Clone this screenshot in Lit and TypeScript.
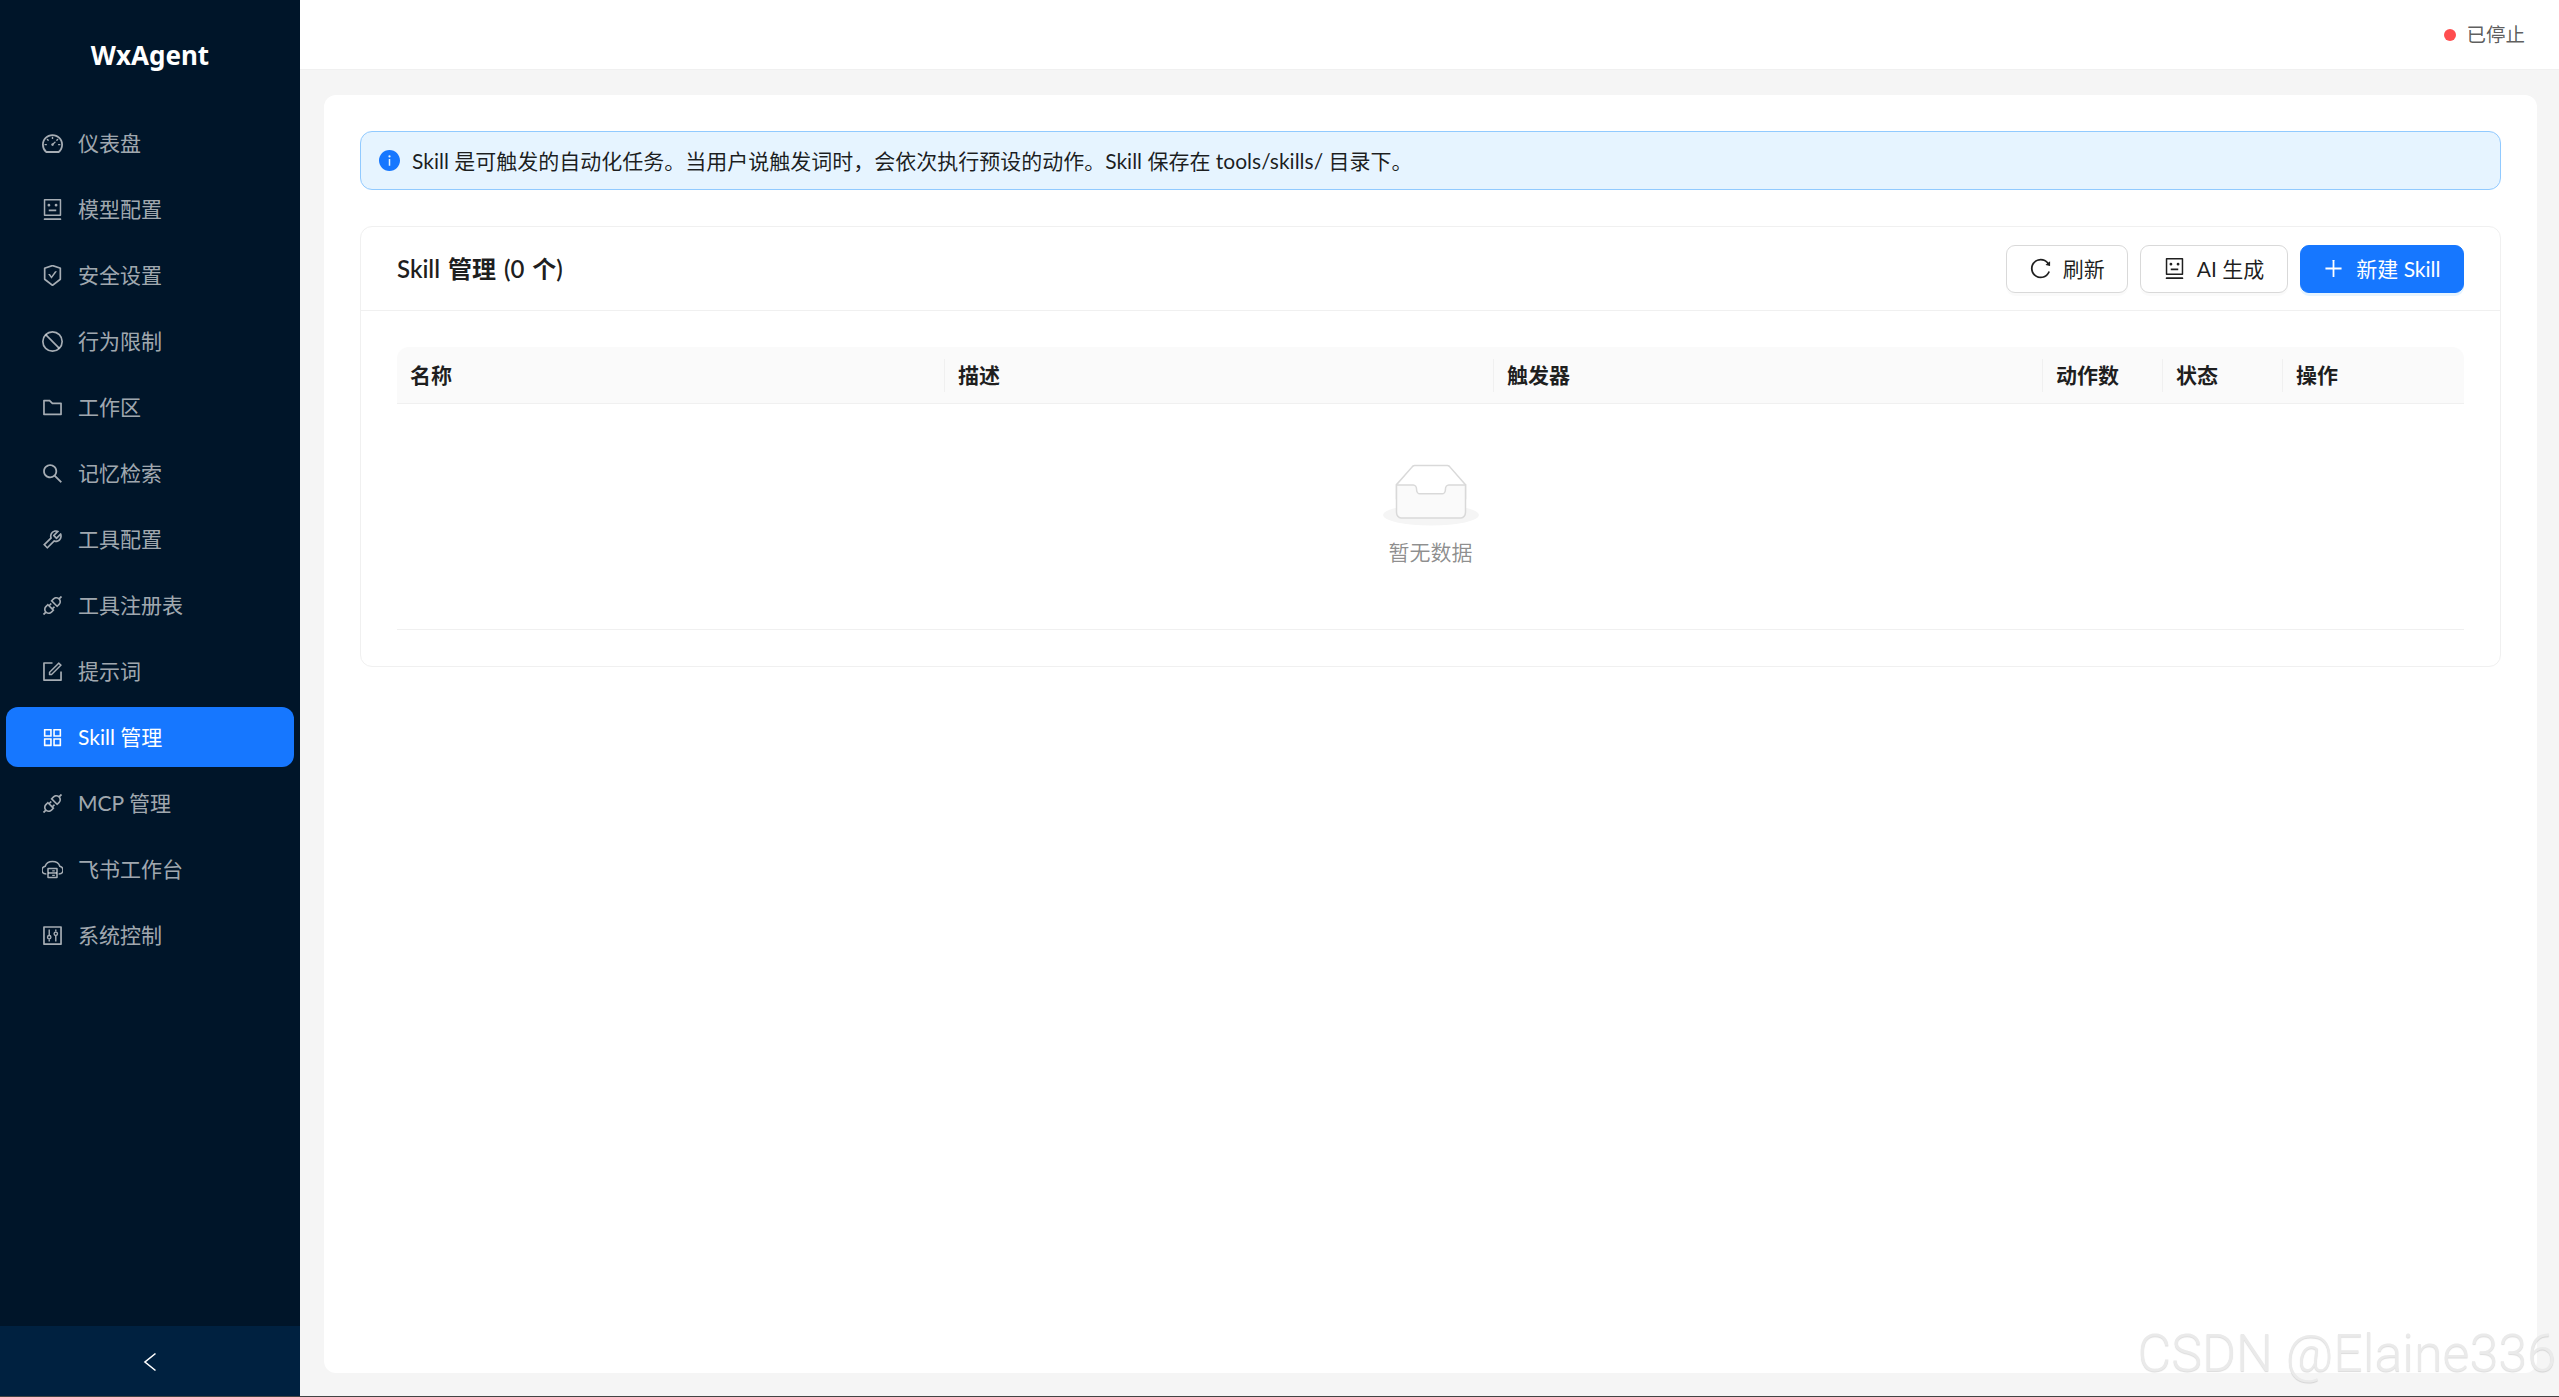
import { LitElement, html, css, svg } from 'lit';
import { customElement } from 'lit/decorators.js';

const P = {
  dashboard: svg`<path d="M924.8 385.6a446.7 446.7 0 00-96-142.4 446.7 446.7 0 00-142.4-96C631.1 123.8 572.5 112 512 112s-119.1 11.8-174.4 35.2a446.7 446.7 0 00-142.4 96 446.7 446.7 0 00-96 142.4C75.8 440.9 64 499.5 64 560c0 132.7 58.3 257.7 159.9 343.1l1.7 1.4c5.8 4.8 13.1 7.5 20.6 7.5h531.7c7.5 0 14.8-2.7 20.6-7.5l1.7-1.4C901.7 817.7 960 692.7 960 560c0-60.5-11.9-119.1-35.2-174.4zM761.4 836H262.6A371.12 371.12 0 01140 560c0-99.4 38.7-192.8 109-263 70.3-70.3 163.7-109 263-109 99.4 0 192.8 38.7 263 109 70.3 70.3 109 163.7 109 263 0 105.6-44.5 205.5-122.6 276zM623.5 421.5a8.03 8.03 0 00-11.3 0L527.7 506c-18.7-5-39.4-.2-54.1 14.5a55.95 55.95 0 000 79.2 55.95 55.95 0 0079.2 0 55.87 55.87 0 0014.5-54.1l84.5-84.5c3.1-3.1 3.1-8.2 0-11.3l-28.3-28.3zM490 320h44c4.4 0 8-3.6 8-8v-80c0-4.4-3.6-8-8-8h-44c-4.4 0-8 3.6-8 8v80c0 4.4 3.6 8 8 8zm260 218v44c0 4.4 3.6 8 8 8h80c4.4 0 8-3.6 8-8v-44c0-4.4-3.6-8-8-8h-80c-4.4 0-8 3.6-8 8zm12.7-197.2l-31.1-31.1a8.03 8.03 0 00-11.3 0l-56.6 56.6a8.03 8.03 0 000 11.3l31.1 31.1c3.1 3.1 8.2 3.1 11.3 0l56.6-56.6c3.1-3.1 3.1-8.2 0-11.3zm-458.6-31.1a8.03 8.03 0 00-11.3 0l-31.1 31.1a8.03 8.03 0 000 11.3l56.6 56.6c3.1 3.1 8.2 3.1 11.3 0l31.1-31.1c3.1-3.1 3.1-8.2 0-11.3l-56.6-56.6zM262 530h-80c-4.4 0-8 3.6-8 8v44c0 4.4 3.6 8 8 8h80c4.4 0 8-3.6 8-8v-44c0-4.4-3.6-8-8-8z"/>`,
  robot: svg`<path d="M300 328a60 60 0 10120 0 60 60 0 10-120 0zM852 64H172c-17.7 0-32 14.3-32 32v660c0 17.7 14.3 32 32 32h680c17.7 0 32-14.3 32-32V96c0-17.7-14.3-32-32-32zm-32 660H204V128h616v596zM604 328a60 60 0 10120 0 60 60 0 10-120 0zm250.2 556H169.8c-16.5 0-29.8 14.3-29.8 32v36c0 4.4 3.3 8 7.4 8h729.1c4.1 0 7.4-3.6 7.4-8v-36c.1-17.7-13.2-32-29.7-32zM664 508H360c-4.4 0-8 3.6-8 8v60c0 4.4 3.6 8 8 8h304c4.4 0 8-3.6 8-8v-60c0-4.4-3.6-8-8-8z"/>`,
  safety: svg`<path d="M866.9 169.9L527.1 54.1C523 52.7 517.5 52 512 52s-11 .7-15.1 2.1L157.1 169.9c-8.3 2.8-15.1 12.4-15.1 21.2v482.4c0 8.8 5.7 20.4 12.6 25.9L499.3 968c3.5 2.7 8 4.1 12.6 4.1s9.2-1.4 12.6-4.1l344.7-268.6c6.9-5.4 12.6-17 12.6-25.9V191.1c.2-8.8-6.6-18.3-14.9-21.2zM810 654.3L512 886.5 214 654.3V226.7l298-101.6 298 101.6v427.6zm-405.8-201c-3-4.1-7.8-6.6-13-6.6H336c-6.5 0-10.3 7.4-6.5 12.7l126.4 174a16.1 16.1 0 0026 0l212.6-292.7c3.8-5.3 0-12.7-6.5-12.7h-55.2c-5.1 0-10 2.5-13 6.6L468.9 542.4l-64.7-89.1z"/>`,
  stop: svg`<circle cx="512" cy="512" r="412" fill="none" stroke="currentColor" stroke-width="72"/><path d="M222 222L802 802" fill="none" stroke="currentColor" stroke-width="72"/>`,
  folder: svg`<path d="M880 298.4H521L403.7 186.2a8.15 8.15 0 00-5.5-2.2H144c-17.7 0-32 14.3-32 32v592c0 17.7 14.3 32 32 32h736c17.7 0 32-14.3 32-32V330.4c0-17.7-14.3-32-32-32zM840 768H184V256h188.5l119.6 114.4H840V768z"/>`,
  search: svg`<path d="M909.6 854.5L649.9 594.8C690.2 542.7 712 479 712 412c0-80.2-31.3-155.4-87.9-212.1-56.6-56.7-132-87.9-212.1-87.9s-155.5 31.3-212.1 87.9C143.2 256.5 112 331.8 112 412c0 80.1 31.3 155.5 87.9 212.1C256.5 680.8 331.8 712 412 712c67 0 130.6-21.8 182.7-62l259.7 259.6a8.2 8.2 0 0011.6 0l43.6-43.5a8.2 8.2 0 000-11.6zM570.4 570.4C528 612.7 471.8 636 412 636s-116-23.3-158.4-65.6C211.3 528 188 471.8 188 412s23.3-116.1 65.6-158.4C296 211.3 352.2 188 412 188s116.1 23.2 158.4 65.6S636 352.2 636 412s-23.3 116.1-65.6 158.4z"/>`,
  tool: svg`<path d="M876.6 239.5c-.5-.9-1.2-1.8-2-2.5-5-5-13.1-5-18.1 0L684.2 409.3l-67.9-67.9L788.7 169c.8-.8 1.4-1.6 2-2.5 3.6-6.1 1.6-13.9-4.5-17.5-98.2-58-226.8-44.7-311.3 39.7-67 67-89.2 162-66.5 247.4l-293 293c-3 3-2.8 7.9.3 11l169.7 169.7c3.1 3.1 8.1 3.3 11 .3l292.9-292.9c85.5 22.8 180.5.7 247.6-66.4 84.4-84.5 97.7-213.1 39.7-311.3zM786 499.8c-58.1 58.1-145.3 69.3-214.6 33.6l-8.8 8.8-.1-.1-274 274.1-79.2-79.2 230.1-230.1s0 .1.1.1l52.8-52.8c-35.7-69.3-24.5-156.5 33.6-214.6a184.2 184.2 0 01144-53.5L537 318.9a32.05 32.05 0 000 45.3l124.5 124.5a32.05 32.05 0 0045.3 0l132.8-132.8c3.7 51.8-14.4 104.8-53.6 143.9z"/>`,
  api: svg`<path d="M917.7 148.8l-42.4-42.4c-1.6-1.6-3.6-2.3-5.7-2.3s-4.1.8-5.7 2.3l-76.1 76.1a199.27 199.27 0 00-112.1-34.3c-51.2 0-102.4 19.5-141.5 58.6L432.3 308.7a8.03 8.03 0 000 11.3L704 591.7c1.6 1.6 3.6 2.3 5.7 2.3 2 0 4.1-.8 5.7-2.3l101.9-101.9c68.9-69 77-175.7 24.3-253.5l76.1-76.1c3.1-3.2 3.1-8.3 0-11.4zM769.1 441.7l-59.4 59.4-186.8-186.8 59.4-59.4c24.9-24.9 58.1-38.7 93.4-38.7 35.3 0 68.4 13.7 93.4 38.7 24.9 24.9 38.7 58.1 38.7 93.4 0 35.3-13.8 68.4-38.7 93.4zm-190.2 105a8.03 8.03 0 00-11.3 0L501 613.3 410.7 523l66.7-66.7c3.1-3.1 3.1-8.2 0-11.3L441 408.6a8.03 8.03 0 00-11.3 0L363 475.3l-43-43a7.85 7.85 0 00-5.7-2.3c-2 0-4.1.8-5.7 2.3L206.8 534.2c-68.9 69-77 175.7-24.3 253.5l-76.1 76.1a8.03 8.03 0 000 11.3l42.4 42.4c1.6 1.6 3.6 2.3 5.7 2.3s4.1-.8 5.7-2.3l76.1-76.1c33.7 22.9 72.9 34.3 112.1 34.3 51.2 0 102.4-19.5 141.5-58.6l101.9-101.9c3.1-3.1 3.1-8.2 0-11.3l-43-43 66.7-66.7c3.1-3.1 3.1-8.2 0-11.3l-36.6-36.2zM441.7 769.1a131.32 131.32 0 01-93.4 38.7c-35.3 0-68.4-13.7-93.4-38.7a131.32 131.32 0 01-38.7-93.4c0-35.3 13.7-68.4 38.7-93.4l59.4-59.4 186.8 186.8-59.4 59.4z"/>`,
  form: svg`<path d="M904 512h-56c-4.4 0-8 3.6-8 8v320H184V184h320c4.4 0 8-3.6 8-8v-56c0-4.4-3.6-8-8-8H144c-17.7 0-32 14.3-32 32v736c0 17.7 14.3 32 32 32h736c17.7 0 32-14.3 32-32V520c0-4.4-3.6-8-8-8z"/><path d="M355.9 534.9L354 653.8c-.1 8.9 7.1 16.2 16 16.2h.4l118-2.9c2-.1 4-.9 5.4-2.3l415.9-415c3.1-3.1 3.1-8.2 0-11.3L785.4 114.3c-1.6-1.6-3.6-2.3-5.7-2.3s-4.1.8-5.7 2.3l-415.8 415a8.3 8.3 0 00-2.3 5.6zm63.5 23.6L779.7 199l45.2 45.1-360.5 359.7-45.7 1.1.7-46.4z"/>`,
  appstore: svg`<path d="M464 144H160c-8.8 0-16 7.2-16 16v304c0 8.8 7.2 16 16 16h304c8.8 0 16-7.2 16-16V160c0-8.8-7.2-16-16-16zm-52 268H212V212h200v200zm452-268H560c-8.8 0-16 7.2-16 16v304c0 8.8 7.2 16 16 16h304c8.8 0 16-7.2 16-16V160c0-8.8-7.2-16-16-16zm-52 268H612V212h200v200zM464 544H160c-8.8 0-16 7.2-16 16v304c0 8.8 7.2 16 16 16h304c8.8 0 16-7.2 16-16V560c0-8.8-7.2-16-16-16zm-52 268H212V612h200v200zm452-268H560c-8.8 0-16 7.2-16 16v304c0 8.8 7.2 16 16 16h304c8.8 0 16-7.2 16-16V560c0-8.8-7.2-16-16-16zm-52 268H612V612h200v200z"/>`,
  cloud: svg`<g fill="none" stroke="currentColor" stroke-width="66"><path d="M250 700C130 700 64 620 64 530C64 450 120 390 200 372C240 250 360 170 512 170C664 170 784 250 824 372C904 390 960 450 960 530C960 620 894 700 774 700"/><rect x="320" y="470" width="384" height="384" rx="12"/><path d="M320 660H704"/><path d="M500 570H610M500 760H610" stroke-width="50"/></g>`,
  control: svg`<path d="M880 112H144c-17.7 0-32 14.3-32 32v736c0 17.7 14.3 32 32 32h736c17.7 0 32-14.3 32-32V144c0-17.7-14.3-32-32-32zm-40 728H184V184h656v656z"/><g fill="none" stroke="currentColor" stroke-width="60"><path d="M372 256V490M372 680V768M652 256V344M652 534V768"/><circle cx="372" cy="585" r="72"/><circle cx="652" cy="439" r="72"/></g>`,
  reload: svg`<path d="M909.1 209.3l-56.4 44.1C775.8 155.1 656.2 92 521.9 92 290 92 102.3 279.5 102 511.5 101.7 743.7 289.8 932 521.9 932c181.3 0 335.8-115 394.6-276.1 1.5-4.2-.7-8.9-4.9-10.3l-56.7-19.5a8 8 0 00-10.1 4.8c-1.8 5-3.8 10-5.9 14.9-17.3 41-42.1 77.8-73.7 109.4A344.77 344.77 0 01655.9 829c-42.3 17.9-87.4 27-133.8 27-46.5 0-91.5-9.1-133.8-27A341.5 341.5 0 01279 755.2a342.16 342.16 0 01-73.7-109.4c-17.9-42.4-27-87.4-27-133.9s9.1-91.5 27-133.9c17.3-41 42.1-77.8 73.7-109.4 31.6-31.6 68.4-56.4 109.3-73.8 42.3-17.9 87.4-27 133.8-27 46.5 0 91.5 9.1 133.8 27a341.5 341.5 0 01109.3 73.8c9.9 9.9 19.2 20.4 27.8 31.4l-60.2 47a8 8 0 003 14.1l175.6 43c5 1.2 9.9-2.6 9.9-7.7l.8-180.9c-.1-6.6-7.8-10.3-13-6.2z"/>`,
  plus: svg`<path d="M482 152h60q8 0 8 8v704q0 8-8 8h-60q-8 0-8-8V160q0-8 8-8z"/><path d="M176 474h672q8 0 8 8v60q0 8-8 8H176q-8 0-8-8v-60q0-8 8-8z"/>`,
  info: svg`<path d="M512 64C264.6 64 64 264.6 64 512s200.6 448 448 448 448-200.6 448-448S759.4 64 512 64zm32 664c0 4.4-3.6 8-8 8h-48c-4.4 0-8-3.6-8-8V456c0-4.4 3.6-8 8-8h48c4.4 0 8 3.6 8 8v272zm-32-344a48.01 48.01 0 010-96 48.01 48.01 0 010 96z"/>`,
};

type IconName = keyof typeof P;

const icon = (name: IconName) =>
  html`<svg class="icon" viewBox="64 64 896 896" fill="currentColor" aria-hidden="true">${P[name]}</svg>`;

const MENU: { label: string; icon: IconName; active?: boolean }[] = [
  { label: '仪表盘', icon: 'dashboard' },
  { label: '模型配置', icon: 'robot' },
  { label: '安全设置', icon: 'safety' },
  { label: '行为限制', icon: 'stop' },
  { label: '工作区', icon: 'folder' },
  { label: '记忆检索', icon: 'search' },
  { label: '工具配置', icon: 'tool' },
  { label: '工具注册表', icon: 'api' },
  { label: '提示词', icon: 'form' },
  { label: 'Skill 管理', icon: 'appstore', active: true },
  { label: 'MCP 管理', icon: 'api' },
  { label: '飞书工作台', icon: 'cloud' },
  { label: '系统控制', icon: 'control' },
];

const COLUMNS = [
  { label: '名称', width: 548 },
  { label: '描述', width: 549 },
  { label: '触发器', width: 549 },
  { label: '动作数', width: 120 },
  { label: '状态', width: 120 },
  { label: '操作', width: 181 },
];

@customElement('app-root')
export class AppRoot extends LitElement {
  static styles = css`
    :host {
      display: flex;
      position: relative;
      height: 100vh;
      overflow: hidden;
      font-family: Lato, 'Noto Sans CJK SC', sans-serif;
      font-size: 21px;
      line-height: 1.5;
      color: rgba(0, 0, 0, 0.88);
      background: #f5f5f5;
    }
    .icon {
      display: block;
      width: 21px;
      height: 21px;
      flex: none;
    }
    .sider {
      width: 300px;
      flex: none;
      display: flex;
      flex-direction: column;
      background: #001529;
    }
    .logo {
      height: 110px;
      display: flex;
      align-items: center;
      justify-content: center;
      color: #fff;
      font-family: 'Noto Sans', sans-serif;
      font-size: 26px;
      font-weight: 700;
    }
    .menu {
      flex: 1;
      margin-top: 3px;
      display: flex;
      flex-direction: column;
      gap: 6px;
      padding: 0 6px;
    }
    .item {
      height: 60px;
      display: flex;
      align-items: center;
      gap: 15px;
      padding-left: 36px;
      border-radius: 12px;
      color: rgba(255, 255, 255, 0.65);
    }
    .item.active {
      background: #1677ff;
      color: #fff;
    }
    .collapse {
      height: 71px;
      display: flex;
      align-items: center;
      justify-content: center;
      background: #002140;
      color: #fff;
    }
    .collapse svg {
      display: block;
      width: 14px;
      height: 20px;
    }
    .main {
      flex: 1;
      min-width: 0;
      display: flex;
      flex-direction: column;
    }
    .topbar {
      height: 70px;
      box-sizing: border-box;
      flex: none;
      display: flex;
      align-items: center;
      justify-content: flex-end;
      gap: 10.5px;
      padding-right: 34px;
      background: #fff;
      border-bottom: 1px solid #f0f0f0;
      font-size: 19.5px;
      color: rgba(0, 0, 0, 0.65);
    }
    .dot {
      width: 12px;
      height: 12px;
      border-radius: 50%;
      background: #ff4d4f;
    }
    .content {
      flex: 1;
      min-height: 0;
      display: flex;
      padding: 25px 23px 24px 24px;
    }
    .panel {
      flex: 1;
      padding: 36px;
      background: #fff;
      border-radius: 12px;
    }
    .alert {
      height: 59px;
      box-sizing: border-box;
      display: flex;
      align-items: center;
      gap: 12px;
      padding: 0 18px;
      margin-bottom: 36px;
      background: #e6f4ff;
      border: 1.5px solid #91caff;
      border-radius: 12px;
    }
    .alert .icon {
      color: #1677ff;
    }
    .card {
      border: 1.5px solid #f0f0f0;
      border-radius: 12px;
    }
    .card-head {
      height: 83px;
      display: flex;
      align-items: center;
      justify-content: space-between;
      padding: 0 36px;
      border-bottom: 1.5px solid #f0f0f0;
    }
    .title {
      font-size: 24px;
      font-weight: 600;
      word-spacing: 2px;
    }
    .actions {
      display: flex;
      gap: 12px;
    }
    .btn {
      height: 48px;
      box-sizing: border-box;
      display: inline-flex;
      align-items: center;
      gap: 12px;
      padding: 0 22.5px;
      font: inherit;
      color: rgba(0, 0, 0, 0.88);
      background: #fff;
      border: 1.5px solid #d9d9d9;
      border-radius: 9px;
      box-shadow: 0 3px 0 rgba(0, 0, 0, 0.02);
    }
    .btn.primary {
      color: #fff;
      background: #1677ff;
      border-color: #1677ff;
      box-shadow: 0 3px 0 rgba(5, 145, 255, 0.1);
    }
    .card-body {
      padding: 36px;
    }
    .thead {
      height: 57px;
      box-sizing: border-box;
      display: flex;
      align-items: center;
      background: #fafafa;
      border-bottom: 1.5px solid #f0f0f0;
      border-radius: 12px 12px 0 0;
      font-weight: 600;
    }
    .th {
      box-sizing: border-box;
      height: 33px;
      line-height: 31px;
      padding-left: 13px;
      flex: none;
      border-right: 1.5px solid #f0f0f0;
    }
    .th:last-child {
      border-right: none;
    }
    .empty {
      height: 226px;
      box-sizing: border-box;
      display: flex;
      flex-direction: column;
      align-items: center;
      padding-top: 60px;
      gap: 10.5px;
      border-bottom: 1.5px solid #f0f0f0;
      color: rgba(0, 0, 0, 0.45);
    }
    .empty svg {
      display: block;
      width: 96px;
      height: 61.5px;
    }
    .watermark {
      position: absolute;
      right: 3px;
      bottom: 13px;
      font-family: Roboto, 'Liberation Sans', sans-serif;
      font-weight: 300;
      font-size: 52px;
      line-height: 1.15;
      white-space: nowrap;
      color: #eaeaea;
      text-shadow: 0 1px 1px rgba(0, 0, 0, 0.14);
    }
    .edge {
      position: absolute;
      left: 0;
      right: 0;
      bottom: 0;
      height: 1px;
      background: #444;
    }
  `;

  render() {
    return html`
      <aside class="sider">
        <div class="logo">WxAgent</div>
        <nav class="menu">
          ${MENU.map(
            (m) => html`<div class="item ${m.active ? 'active' : ''}">${icon(m.icon)}<span>${m.label}</span></div>`,
          )}
        </nav>
        <div class="collapse">
          <svg viewBox="0 0 14 20" fill="none" stroke="currentColor" stroke-width="1.6"><path d="M12.5 1.5L2 10l10.5 8.5"></path></svg>
        </div>
      </aside>
      <div class="main">
        <header class="topbar"><span class="dot"></span><span>已停止</span></header>
        <main class="content">
          <section class="panel">
            <div class="alert">
              ${icon('info')}
              <span>Skill 是可触发的自动化任务。当用户说触发词时，会依次执行预设的动作。Skill 保存在 tools/skills/ 目录下。</span>
            </div>
            <div class="card">
              <div class="card-head">
                <div class="title">Skill 管理 (0 个)</div>
                <div class="actions">
                  <button class="btn">${icon('reload')}<span>刷新</span></button>
                  <button class="btn">${icon('robot')}<span>AI 生成</span></button>
                  <button class="btn primary">${icon('plus')}<span>新建 Skill</span></button>
                </div>
              </div>
              <div class="card-body">
                <div class="thead">
                  ${COLUMNS.map((c) => html`<div class="th" style="width:${c.width}px">${c.label}</div>`)}
                </div>
                <div class="empty">
                  <svg viewBox="0 0 64 41">
                    <g transform="translate(0 1)" fill="none" fill-rule="evenodd">
                      <ellipse fill="#f5f5f5" cx="32" cy="33" rx="32" ry="7"></ellipse>
                      <g fill-rule="nonzero" stroke="#d9d9d9">
                        <path d="M55 12.76L44.854 1.258C44.367.474 43.656 0 42.907 0H21.093c-.749 0-1.46.474-1.947 1.257L9 12.761V22h46v-9.24z"></path>
                        <path d="M41.613 15.931c0-1.605.994-2.93 2.227-2.931H55v18.137C55 33.26 53.68 35 52.05 35h-40.1C10.32 35 9 33.259 9 31.137V13h11.16c1.233 0 2.227 1.323 2.227 2.928v.022c0 1.605 1.005 2.901 2.237 2.901h14.752c1.232 0 2.237-1.308 2.237-2.913v-.007z" fill="#fafafa"></path>
                      </g>
                    </g>
                  </svg>
                  <span>暂无数据</span>
                </div>
              </div>
            </div>
          </section>
        </main>
      </div>
      <div class="watermark">CSDN @Elaine336</div>
      <div class="edge"></div>
    `;
  }
}
